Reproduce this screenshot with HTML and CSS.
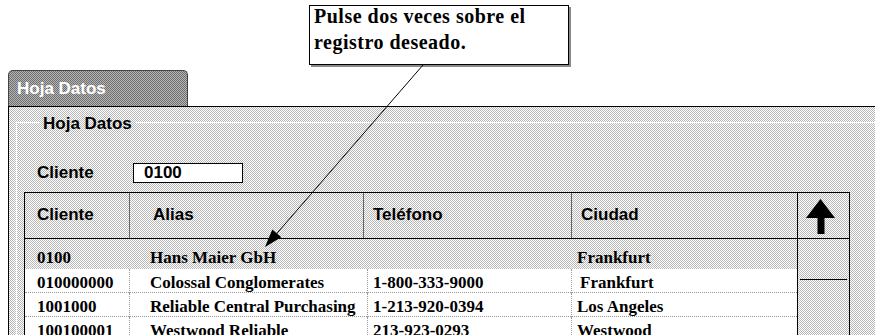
FILE: index.html
```html
<!DOCTYPE html>
<html>
<head>
    <title>Hoja Datos</title>
    <link rel="stylesheet" href="styles.css">
</head>
<body>
    <div class="callout">
        <div class="callout-text">Pulse dos veces sobre el<br>registro deseado.</div>
    </div>

    <div class="tab">Hoja Datos</div>

    <div class="panel">
        <div class="group">
            <div class="legend">Hoja Datos</div>

            <div class="field">
                <label for="cliente">Cliente</label>
                <div class="input" id="cliente">0100</div>
            </div>

            <div class="grid">
                <div class="grid-head">
                    <div class="hcell first">Cliente</div>
                    <div class="hcell alias">Alias</div>
                    <div class="hcell">Teléfono</div>
                    <div class="hcell">Ciudad</div>
                    <div class="hcell scroll-head">
                        <svg width="29" height="35" viewBox="0 0 29 35">
                            <polygon points="14.5,0 29,19 18.5,19 18.5,35 11.5,35 11.5,19 0,19" fill="#000"/>
                        </svg>
                    </div>
                </div>
                <div class="grid-body">
                    <div class="rows">
                        <div class="row current">
                            <div class="cell first">0100</div>
                            <div class="cell alias">Hans Maier GbH</div>
                            <div class="cell"></div>
                            <div class="cell">Frankfurt</div>
                        </div>
                        <div class="row">
                            <div class="cell first">010000000</div>
                            <div class="cell alias">Colossal Conglomerates</div>
                            <div class="cell">1-800-333-9000</div>
                            <div class="cell city">Frankfurt</div>
                        </div>
                        <div class="row">
                            <div class="cell first">1001000</div>
                            <div class="cell alias">Reliable Central Purchasing</div>
                            <div class="cell">1-213-920-0394</div>
                            <div class="cell">Los Angeles</div>
                        </div>
                        <div class="row">
                            <div class="cell first">100100001</div>
                            <div class="cell alias">Westwood Reliable</div>
                            <div class="cell">213-923-0293</div>
                            <div class="cell">Westwood</div>
                        </div>
                    </div>
                    <div class="scroll">
                        <div class="thumb"></div>
                    </div>
                </div>
            </div>
        </div>
    </div>

    <!-- leader line from the note to the first row -->
    <svg class="pointer" width="875" height="335" viewBox="0 0 875 335">
        <line x1="423" y1="65" x2="272" y2="239" stroke="#000" stroke-width="1"/>
        <polygon points="265,247 281.3,237.3 272.3,229.5" fill="#000"/>
    </svg>
</body>
</html>
```

FILE: styles.css
```css
body {
    margin: 0;
    background: #fff;
    font-family: "Liberation Sans", Arial, sans-serif;
    font-weight: bold;
    font-size: 17px;
    color: #000;
    height: 335px;
    overflow: hidden;
}

.callout {
    margin: 5px 0 0 309px;
    width: 250px;
    height: 58px;
    padding: 0 4px;
    border: 1px solid #000;
    box-shadow: 2px 2px 0 #8a8a8a;
    background: #fff;
    font-family: "Liberation Serif", "Times New Roman", serif;
    font-size: 20px;
    letter-spacing: 0.5px;
    line-height: 26px;
}

.callout-text {
    margin-top: -3px;
}

.tab {
    margin: 5px 0 0 8px;
    width: 170px;
    height: 35px;
    padding-left: 8px;
    border: 1px solid #444;
    border-bottom: none;
    border-radius: 5px 5px 0 0;
    background-color: #b4b4b4;
    background-image: url("data:image/svg+xml,%3Csvg xmlns='http://www.w3.org/2000/svg' width='2' height='2' shape-rendering='crispEdges'%3E%3Crect width='1' height='1' fill='%23707070'/%3E%3Crect x='1' y='1' width='1' height='1' fill='%23707070'/%3E%3C/svg%3E");
    background-size: 2px 2px;
    color: #fff;
    line-height: 36px;
}

.panel,
.legend {
    background-color: #fff;
    background-image: url("data:image/svg+xml,%3Csvg xmlns='http://www.w3.org/2000/svg' width='2' height='2' shape-rendering='crispEdges'%3E%3Crect width='1' height='1' fill='%23b8b8b8'/%3E%3Crect x='1' y='1' width='1' height='1' fill='%23b8b8b8'/%3E%3C/svg%3E");
    background-size: 2px 2px;
    background-attachment: fixed;
}

.panel {
    margin-left: 8px;
    height: 240px;
    border-top: 1px solid #000;
    border-left: 1px solid #000;
}

.group {
    margin: 15px 0 0 7px;
    height: 300px;
    border-top: 1px dotted #fff;
    border-left: 1px dotted #fff;
}

.legend {
    width: fit-content;
    margin: -8px 0 0 22px;
    padding: 0 4px;
    line-height: 17px;
}

.field {
    display: flex;
    align-items: center;
    margin-top: 31px;
    padding-left: 20px;
}

.field label {
    width: 96px;
}

.input {
    width: 98px;
    height: 18px;
    padding-left: 10px;
    border: 1px solid #000;
    background: #fff;
    line-height: 18px;
}

.grid {
    margin: 9px 0 0 7px;
    width: 824px;
    border-top: 1px solid #000;
    border-left: 1px solid #000;
    border-right: 1px solid #000;
}

.grid-head {
    display: grid;
    grid-template-columns: 104px 234px 208px 226px 52px;
    height: 45px;
    border-bottom: 1px solid #000;
}

.hcell {
    display: flex;
    align-items: center;
    padding: 0 0 2px 9px;
    border-left: 1px solid #666;
}

.hcell.first {
    padding-left: 12px;
    border-left: none;
}

.hcell.alias {
    padding-left: 23px;
}

.hcell.scroll-head {
    padding: 2px 0 0 8px;
    border-left: 1px solid #000;
}

.grid-body {
    display: flex;
}

.rows {
    width: 772px;
    padding-top: 5px;
    font-family: "Liberation Serif", "Times New Roman", serif;
}

.row {
    display: grid;
    grid-template-columns: 104px 238px 204px 226px;
    height: 24px;
    box-sizing: border-box;
    background: #fff;
    border-bottom: 1px dotted #999;
    line-height: 21px;
}

.row.current {
    height: 25px;
    background: transparent;
    border-bottom: none;
}

.cell {
    padding: 3px 0 0 5px;
    border-left: 1px dotted #999;
    white-space: nowrap;
}

.cell.first {
    padding-left: 12px;
    border-left: none;
}

.cell.alias {
    padding-left: 20px;
}

.row.current .cell {
    border-left-color: transparent;
}

.cell.city {
    padding-left: 8px;
}

.scroll {
    width: 51px;
    height: 120px;
    border-left: 1px solid #000;
}

.thumb {
    height: 40px;
    margin: 0 2px;
    border-bottom: 1px solid #000;
}

.pointer {
    position: absolute;
    top: 0;
    left: 0;
}
```
